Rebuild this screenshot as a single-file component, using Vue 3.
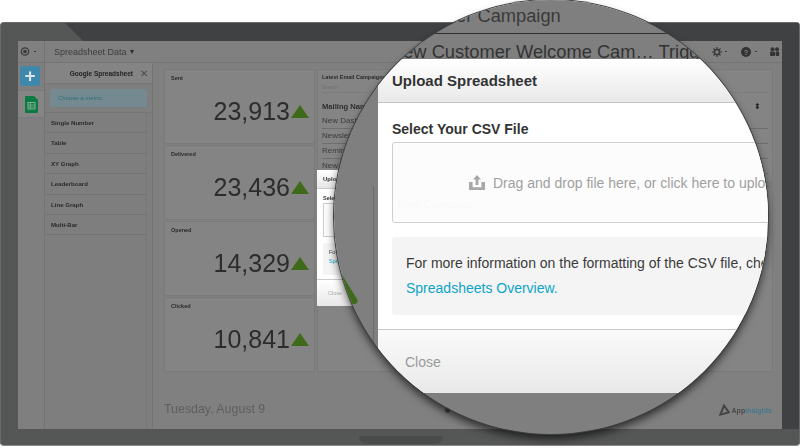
<script setup>
const metrics = ['Single Number', 'Table', 'XY Graph', 'Leaderboard', 'Line Graph', 'Multi-Bar']
const stats = [
  { label: 'Sent', value: '23,913' },
  { label: 'Delivered', value: '23,436' },
  { label: 'Opened', value: '14,329' },
  { label: 'Clicked', value: '10,841' }
]
const rows = ['New Dashboard', 'Newsletter', 'Reminder', 'New Campaign']
</script>

<template>
  <div class="stage">
    <div class="frame">
      <div class="frame-top"></div>
      <div class="screen">
        <header class="topbar">
          <div class="eye-cell">
            <svg width="10" height="9" viewBox="0 0 10 9" fill="none" stroke="#3a3a3a" stroke-width="1.3">
              <circle cx="5" cy="4.5" r="3.7" />
              <circle cx="5" cy="4.5" r="1.2" fill="#3a3a3a" />
            </svg>
            <i class="dot"></i>
          </div>
          <div class="title">Spreadsheet Data<i class="caret"></i></div>
          <div class="tools">
            <svg class="gear" width="10" height="10" viewBox="0 0 10 10" fill="none" stroke="#383838">
              <circle cx="5" cy="5" r="2.6" stroke-width="1.5" />
              <path d="M5 0v2M5 8v2M0 5h2M8 5h2M1.5 1.5l1.4 1.4M7.1 7.1l1.4 1.4M8.5 1.5L7.1 2.9M2.9 7.1L1.5 8.5" stroke-width="1.2" />
            </svg>
            <i class="dot"></i>
            <svg class="help" width="10" height="10" viewBox="0 0 10 10"><circle cx="5" cy="5" r="5" fill="#333" /><text x="5" y="7.6" text-anchor="middle" font-size="7.5" font-weight="700" fill="#808080" font-family="Liberation Sans">?</text></svg>
            <i class="dot"></i>
            <svg class="people" width="11" height="9" viewBox="0 0 11 9" fill="#333"><circle cx="3.5" cy="2.2" r="2" /><circle cx="8" cy="2.2" r="2" /><rect x="1" y="4.4" width="5" height="4.6" rx="1" /><rect x="6.6" y="4.4" width="3.6" height="4.6" rx="1" /></svg>
          </div>
        </header>
        <div class="main">
          <aside class="rail">
            <div class="plus">+</div>
            <div class="sheet-cell">
              <svg width="13" height="17" viewBox="0 0 13 17">
                <path d="M1 0h8l4 4v12a1 1 0 0 1-1 1H1a1 1 0 0 1-1-1V1a1 1 0 0 1 1-1z" fill="#0e7a43" />
                <rect x="3" y="6.5" width="7" height="6.5" fill="none" stroke="#7fae94" stroke-width="1" />
                <path d="M3 9h7M3 11h7M5.5 7v6" stroke="#7fae94" stroke-width=".8" />
              </svg>
            </div>
          </aside>
          <aside class="panel">
            <div class="panel-head"><b>Google Spreadsheet</b><span class="x">✕</span></div>
            <div class="hint-wrap"><div class="hint">Choose a metric:</div></div>
            <div v-for="m in metrics" :key="m" class="metric">{{ m }}</div>
            <div class="metric-rest"></div>
          </aside>
          <section class="content">
            <div class="board">
              <div class="stats">
                <div v-for="s in stats" :key="s.label" class="stat">
                  <div class="card-label">{{ s.label }}</div>
                  <div class="stat-value">
                    <span>{{ s.value }}</span>
                    <i class="up"></i>
                  </div>
                </div>
              </div>
              <div class="side">
                <div class="campaign">
                  <div class="card-label">Latest Email Campaigns</div>
                  <div class="search">Search</div>
                  <div class="thead"><b>Mailing Name</b><span class="sort">⬍</span></div>
                  <div v-for="r in rows" :key="r" class="trow">{{ r }}</div>
                </div>
                <div class="lower"></div>
              </div>
            </div>
            <footer class="foot">
              <span class="date">Tuesday, August 9</span>
              <span class="brand">
                <svg width="11" height="12" viewBox="0 0 11 12" fill="none" stroke="#444" stroke-width="2"><path d="M5 1.5L9.8 8.4L1.3 10.6Z" /></svg>
                <span>App<em>Insights</em></span>
              </span>
            </footer>
          </section>
        </div>
      </div>
      <div class="stand"></div>
    </div>

    <i class="stray"></i>

    <div class="mini-modal">
      <div class="mini-head">Upload Spreadsheet</div>
      <div class="mini-body">
        <div class="mini-label">Select Your</div>
        <div class="mini-drop"></div>
        <div class="mini-info">
          <div>For more</div>
          <div class="mini-link">Spreadsheets</div>
        </div>
      </div>
      <div class="mini-foot">Close</div>
    </div>

    <div class="lens">
      <div class="lens-bg">
        <div class="big-a"><span class="big-a-text">Newsletter Campaign</span></div>
        <div class="big-b">New Customer Welcome Cam… Trigger</div>
        <div class="lens-line"></div>
        <svg class="lens-tri" width="40" height="60" viewBox="0 0 40 60"><path d="M0 0L23 37Q25 41 21 42L0 44Z" fill="#3f6a1a" /></svg>
      </div>
      <div class="modal">
        <div class="modal-head">Upload Spreadsheet</div>
        <div class="modal-body">
          <div class="field-label">Select Your CSV File</div>
          <div class="drop">
            <span class="ghost">New Campaign</span>
            <svg class="upload" width="16" height="15" viewBox="0 0 16 15" fill="#a8a8a8">
              <path d="M8 0L12 4.4H9.4V10H6.6V4.4H4Z" />
              <path d="M0 7h3.6v5.2h8.8V7H16v8H0z" />
            </svg>
            <span class="drop-text">Drag and drop file here, or click here to upload</span>
          </div>
          <div class="info">
            <div>For more information on the formatting of the CSV file, check out the</div>
            <a class="link">Spreadsheets Overview.</a>
          </div>
        </div>
        <div class="modal-foot">Close</div>
      </div>
    </div>
  </div>
</template>

<style>
html, body { margin: 0; padding: 0; background: #fff; }
</style>

<style scoped>
.stage {
  position: relative;
  width: 800px;
  height: 448px;
  overflow: hidden;
  background: #fff;
  font-family: "Liberation Sans", Arial, sans-serif;
}
.frame {
  position: relative;
  box-sizing: border-box;
  margin-top: 22px;
  height: 424px;
  padding: 18px 17px 16px;
  background: #555656;
  border: 1px solid #6a6a6a;
  border-bottom-color: #8a8a8a;
  border-radius: 4px;
}
.frame-top {
  position: absolute;
  left: 64px;
  right: 0;
  top: 0;
  height: 18px;
  background: #404142;
  clip-path: polygon(0 0, 100% 0, 100% 100%, 18px 100%);
}
.frame::after {
  content: "";
  position: absolute;
  right: 0;
  top: 0;
  bottom: 16px;
  width: 17px;
  background: #404142;
}
.stand {
  position: absolute;
  left: 358px;
  bottom: 1px;
  width: 84px;
  height: 8px;
  background: #4a4b4b;
  border-radius: 0 0 12px 12px;
}
.screen {
  position: relative;
  z-index: 1;
  display: flex;
  flex-direction: column;
  height: 388px;
  background: #808080;
  filter: blur(.35px);
}
.topbar {
  display: flex;
  align-items: center;
  box-sizing: border-box;
  height: 22px;
  flex: none;
  border-bottom: 1px solid #747474;
  color: #3a3a3a;
}
.eye-cell {
  display: flex;
  align-items: center;
  gap: 4px;
  box-sizing: border-box;
  width: 27px;
  height: 100%;
  padding-left: 2px;
  border-right: 1px solid #747474;
}
.dot {
  display: inline-block;
  width: 2px;
  height: 1px;
  background: #3a3a3a;
}
.title {
  display: flex;
  align-items: center;
  padding-left: 9px;
  font-size: 9px;
  color: #3c3c3c;
}
.caret {
  margin-left: 3px;
  border-left: 2.5px solid transparent;
  border-right: 2.5px solid transparent;
  border-top: 4px solid #2c2c2c;
}
.tools {
  display: flex;
  align-items: center;
  margin-left: auto;
  padding-right: 2px;
}
.gear + .dot { margin-left: 3px; }
.help { margin-left: 14px; }
.help + .dot { margin-left: 4px; }
.people { margin-left: 12px; }
.main {
  display: flex;
  flex: 1;
  min-height: 0;
}
.rail {
  box-sizing: border-box;
  width: 27px;
  flex: none;
  border-right: 1px solid #747474;
  background: #7f7f7f;
  display: flex;
  flex-direction: column;
  padding-top: 3px;
}
.plus {
  width: 20px;
  height: 20px;
  margin-left: 2px;
  border-radius: 3px;
  background: #3f87ab;
  color: #d8e4ea;
  font-size: 19px;
  font-weight: 700;
  line-height: 19px;
  text-align: center;
}
.sheet-cell {
  display: flex;
  justify-content: center;
  align-items: center;
  margin-top: 4px;
  width: 26px;
  height: 26px;
  background: #858585;
  border-top: 1px solid #7a7a7a;
  border-bottom: 1px solid #7a7a7a;
}
.panel {
  box-sizing: border-box;
  width: 108px;
  flex: none;
  display: flex;
  flex-direction: column;
  background: #7e7e7e;
  border-right: 1px solid #747474;
  padding-right: 5px;
}
.panel-head {
  display: flex;
  align-items: center;
  justify-content: flex-end;
  height: 20px;
  margin-right: -5px;
  padding-right: 4px;
  gap: 7px;
  background: #848484;
  border-bottom: 1px solid #767676;
  font-size: 6.5px;
  color: #222;
}
.x { font-size: 9.5px; color: #4a4a4a; }
.hint-wrap {
  box-sizing: border-box;
  height: 29px;
  margin-right: -5px;
  padding: 5px;
  border-bottom: 1px solid #767676;
}
.hint {
  height: 18px;
  line-height: 18px;
  padding-left: 8px;
  background: #748a90;
  border-radius: 2px;
  font-size: 6px;
  color: #2a6f7a;
}
.metric {
  box-sizing: border-box;
  height: 20.4px;
  line-height: 20px;
  padding-left: 6px;
  border-bottom: 1px solid #737373;
  border-right: 1px solid #767676;
  font-size: 6.1px;
  font-weight: 700;
  color: #2a2a2a;
}
.metric-rest { flex: 1; border-right: 1px solid #767676; }
.content {
  flex: 1;
  min-width: 0;
  display: flex;
  flex-direction: column;
  padding: 6px 9px 0 11px;
}
.board { display: flex; gap: 2px; }
.stats {
  display: grid;
  grid-template-rows: repeat(4, 75px);
  gap: 1px;
  width: 151px;
  flex: none;
}
.stat {
  box-sizing: border-box;
  padding: 4.5px 6px;
  background: #848484;
  border: 1px solid #7a7a7a;
}
.card-label {
  font-size: 5.5px;
  font-weight: 700;
  color: #2a2a2a;
  white-space: nowrap;
}
.stat-value {
  display: flex;
  align-items: center;
  justify-content: flex-end;
  gap: 1px;
  margin-top: 15.5px;
  margin-right: -1px;
  font-size: 25px;
  line-height: 30px;
  color: #2c2c2c;
}
.up {
  width: 0;
  height: 0;
  border-left: 9px solid transparent;
  border-right: 9px solid transparent;
  border-bottom: 13px solid #3f6a1a;
}
.side { flex: 1; display: flex; flex-direction: column; gap: 3px; min-width: 0; }
.campaign {
  box-sizing: border-box;
  height: 114px;
  padding: 4px;
  background: #848484;
  border: 1px solid #7a7a7a;
}
.search {
  margin-top: 3px;
  font-size: 5px;
  height: 9px;
  line-height: 9px;
  color: #707070;
  border-bottom: 1px solid #7c7c7c;
}
.thead {
  display: flex;
  justify-content: space-between;
  align-items: center;
  margin-top: 5px;
  height: 16px;
  font-size: 7.6px;
  color: #2e2e2e;
}
.sort { font-size: 8px; color: #222; padding-right: 7px; }
.trow {
  box-sizing: border-box;
  height: 15px;
  line-height: 14px;
  font-size: 8px;
  color: #3a3a3a;
  border-bottom: 1px solid #6e6e6e;
}
.lower {
  flex: 1;
  background: #848484;
  border: 1px solid #7a7a7a;
}
.foot {
  flex: 1;
  display: flex;
  align-items: flex-end;
  justify-content: space-between;
  padding-bottom: 13px;
}
.date { font-size: 12.4px; color: #5e5e5e; }
.brand {
  display: flex;
  align-items: center;
  gap: 2px;
  font-size: 7px;
  font-weight: 700;
  color: #4a4a4a;
  padding-right: 1px;
}
.brand em { font-style: normal; color: #44788a; }
.stray {
  position: absolute;
  left: 445px;
  top: 407px;
  width: 5px;
  height: 6px;
  border-radius: 50%;
  background: #4a4a4a;
  z-index: 2;
}
.mini-modal {
  position: absolute;
  left: 317px;
  top: 170px;
  width: 60px;
  height: 136px;
  box-sizing: border-box;
  display: flex;
  flex-direction: column;
  background: #fff;
  z-index: 2;
  filter: blur(.35px);
}
.mini-head {
  height: 18px;
  line-height: 18px;
  padding-left: 6px;
  font-size: 6px;
  font-weight: 700;
  color: #333;
  white-space: nowrap;
  background: linear-gradient(#fff, #e6e6e6);
  border-bottom: 1px solid #ccc;
}
.mini-body { flex: 1; padding: 6px 6px 0; }
.mini-label { font-size: 5.5px; font-weight: 700; color: #333; white-space: nowrap; }
.mini-drop { height: 32px; margin-top: 2px; border: 1px solid #ccc; background: #fcfcfc; width: 80px; }
.mini-info { margin-top: 6px; padding: 6px; height: 32px; background: #f4f4f4; width: 80px; box-sizing: border-box; font-size: 5.5px; color: #444; }
.mini-link { color: #0ea5c9; margin-top: 3px; white-space: nowrap; }
.mini-foot {
  height: 26px;
  line-height: 26px;
  padding-left: 11px;
  font-size: 5.5px;
  color: #aaa;
  background: linear-gradient(#fff, #e8e8e8);
  border-top: 1px solid #ccc;
}
.lens {
  position: absolute;
  left: 334px;
  top: 0;
  width: 434px;
  height: 434px;
  border-radius: 50%;
  overflow: hidden;
  z-index: 3;
  box-shadow: 0 0 0 1px #3f3f3f, 0 5px 9px rgba(0, 0, 0, .65);
}
.lens-bg {
  position: relative;
  height: 100%;
  background: #7f7f7f;
  color: #333;
  padding-left: 56px;
  box-sizing: border-box;
}
.big-a {
  height: 33px;
  line-height: 31px;
  font-size: 18.3px;
  white-space: nowrap;
  border-bottom: 1px solid #2f2f2f;
  color: #3a3a3a;
}
.big-a-text { margin-left: -4px; }
.big-b {
  margin-top: 4px;
  font-size: 18.3px;
  line-height: 28px;
  white-space: nowrap;
  color: #333;
}
.lens-line {
  position: absolute;
  left: 39px;
  top: 186px;
  bottom: 0;
  width: 1px;
  background: #6c6c6c;
}
.lens-tri { position: absolute; left: 0; top: 262px; }
.modal {
  position: absolute;
  left: 44px;
  top: 59px;
  width: 520px;
  height: 334px;
  display: flex;
  flex-direction: column;
  background: #fff;
  color: #333;
}
.modal-head {
  box-sizing: border-box;
  height: 44px;
  padding-left: 14px;
  line-height: 44px;
  font-size: 15px;
  font-weight: 700;
  background: linear-gradient(#fff, #e9e9e9);
  border-bottom: 1px solid #c4c4c4;
}
.modal-body { flex: 1; padding: 18px 14px 0; }
.field-label { font-size: 14px; font-weight: 700; line-height: 17px; }
.drop {
  position: relative;
  box-sizing: border-box;
  display: flex;
  align-items: center;
  height: 81px;
  margin-top: 4px;
  padding-left: 76px;
  border: 1px solid #cfcfcf;
  border-radius: 3px;
  background: #fcfcfc;
  color: #a0a0a0;
  font-size: 14px;
}
.ghost {
  position: absolute;
  left: 5px;
  top: 55px;
  font-size: 11px;
  color: #f8f8f8;
  filter: blur(.5px);
}
.upload { margin-right: 8px; }
.info {
  box-sizing: border-box;
  height: 78px;
  margin-top: 14px;
  padding: 14px;
  border-radius: 3px;
  background: #f4f4f4;
  font-size: 14px;
  line-height: 25px;
  color: #3a3a3a;
  white-space: nowrap;
}
.link { color: #0da4c8; }
.modal-foot {
  box-sizing: border-box;
  height: 64px;
  padding: 24px 0 0 27px;
  font-size: 14px;
  color: #9a9a9a;
  background: linear-gradient(#fafafa, #e9e9e9);
  border-top: 1px solid #c8c8c8;
}
</style>
